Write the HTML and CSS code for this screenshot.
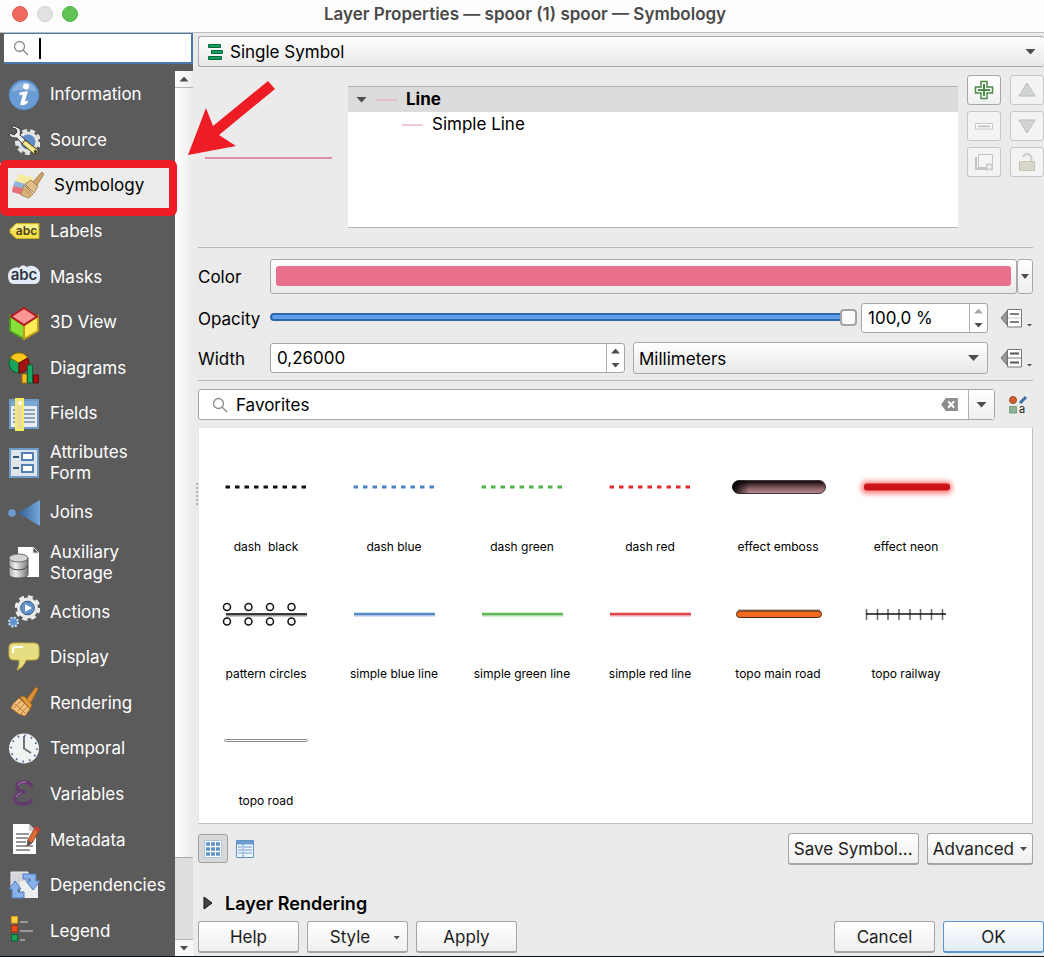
FILE: index.html
```html
<!DOCTYPE html>
<html lang="en">
<head>
<meta charset="utf-8">
<meta name="viewport" content="width=device-width, initial-scale=1">
<title>Layer Properties — spoor (1) spoor — Symbology</title>
<link rel="stylesheet" href="styles.css">
</head>
<body>
<div class="window">
  <header class="titlebar">
    <div class="lights">
      <button class="light light-close" aria-label="Close"></button>
      <button class="light light-min" aria-label="Minimize"></button>
      <button class="light light-max" aria-label="Zoom"></button>
    </div>
    <h1 class="title">Layer Properties — spoor (1) spoor — Symbology</h1>
  </header>

  <div class="body">
    <aside class="sidebar">
      <label class="side-search">
        <svg class="glass" viewBox="0 0 16 16" aria-hidden="true"><circle cx="6.5" cy="6.5" r="5"/><path d="M10.2 10.2L15 15"/></svg>
        <span class="caret"></span>
        <input type="text" aria-label="Search options">
      </label>
      <div class="side-main">
        <nav class="nav">
          <a class="nav-item" href="#information">
            <svg class="nav-icon" viewBox="0 0 32 32"><circle cx="16" cy="16" r="15" fill="#6a9bd2" stroke="#5583ba"/><path d="M4 13Q7 3 17 3Q26 4 28 13Q16 8 4 13Z" fill="#8db4e0"/><circle cx="18" cy="7.500" r="3" fill="#fff"/><path d="M11.500 13.500L20 12L16.800 22.500L20 21.500L19.500 24Q15 27.500 12 25.500L14.800 15.800L11.500 16.200Z" fill="#fff"/></svg>
            <span>Information</span></a>
          <a class="nav-item" href="#source">
            <svg class="nav-icon" viewBox="0 0 32 32"><circle cx="20" cy="18" r="11.500" fill="none" stroke="#e4e4e4" stroke-width="3" stroke-dasharray="5 3"/><circle cx="20" cy="18" r="9" fill="#5f8fc7" stroke="#e4e4e4" stroke-width="3"/><path d="M5 1.500L11 4Q14 7 12 11L22 20L18 24L9 14Q4 15 1 11L2 9L6 11L9 8L8 5L4 4Z" fill="#eee" stroke="#333"/><path d="M17 16L30 26L30 29L26 30L14 20Z" fill="#ecd873" stroke="#4b4325"/><path d="M17 19L26 27" stroke="#fff3ab" stroke-width="2"/><circle cx="27.500" cy="27.500" r="1.500" fill="#333"/></svg>
            <span>Source</span></a>
          <a class="nav-item nav-item-current" href="#symbology" aria-current="page">
            <svg class="nav-icon" viewBox="0 0 32 32"><path d="M8 4L22 8L17 15L3 11Z" fill="#f4eb9c"/><path d="M3 11L17 15L13 20L1 16Z" fill="#8fb6da"/><path d="M1 16L14 19L17 27L0 22Z" fill="#e86f78"/><path d="M12 15L21 24L17 28L9 25Q11 19 12 15Z" fill="#d8b47f" stroke="#b08a56"/><path d="M13 14L19 10L26 16L22 23Z" fill="#e0bf8d" stroke="#b08a56"/><path d="M21 12L30 2L32 4L25 15Z" fill="#d1a56a" stroke="#ab8350"/><path d="M13 19L18 25M15 17L20 23" stroke="#b88f58"/></svg>
            <span>Symbology</span></a>
          <a class="nav-item" href="#labels">
            <svg class="nav-icon" viewBox="0 0 32 32"><path d="M8 7.500H31V22.500H8L2 16.500V13.500Z" fill="#f5e04c" stroke="#c9ad22"/><path d="M8 8.500H30V14H3Z" fill="#fbf08e"/><text x="18.500" y="19" class="abc-small">abc</text></svg>
            <span>Labels</span></a>
          <a class="nav-item" href="#masks">
            <svg class="nav-icon" viewBox="0 0 32 32"><path d="M3.500 8Q8 5 11 7Q14 2 19 6Q24 3 29 7Q33 10 32 16Q32 23 27 23H5Q0 22 0 15Q0 10 3.500 8Z" fill="#e3ebf8"/><text x="16" y="19" class="abc-large">abc</text></svg>
            <span>Masks</span></a>
          <a class="nav-item" href="#view3d">
            <svg class="nav-icon" viewBox="0 0 32 32"><path d="M2 9L16 18V32L2 24Z" fill="#8ade3a" stroke="#4f9a1c" stroke-width="2"/><path d="M30 9L16 18V32L30 24Z" fill="#fcec55" stroke="#bd9a18" stroke-width="2"/><path d="M16 1L29 9.500L16 18L3 9.500Z" fill="#f99595" stroke="#b31d22" stroke-width="2"/></svg>
            <span>3D View</span></a>
          <a class="nav-item" href="#diagrams">
            <svg class="nav-icon" viewBox="0 0 32 32"><path d="M11 11L2.300 6A10 10 0 0 0 11 21Z" fill="#16a35a" stroke="#075c2c"/><path d="M11 11L2.300 6A10 10 0 0 1 19.700 6Z" fill="#fbc81b" stroke="#9d7500"/><path d="M11 11L19.700 6A10 10 0 0 1 11 21Z" fill="#a51214" stroke="#60090b"/><path d="M14 22H19V31H14Z" fill="#f9bb24" stroke="#a37308"/><path d="M19.500 13H24.500V31H19.500Z" fill="#16a765" stroke="#07622c"/><path d="M25.500 23H30.500V31H25.500Z" fill="#a61214" stroke="#650b0c"/></svg>
            <span>Diagrams</span></a>
          <a class="nav-item" href="#fields">
            <svg class="nav-icon" viewBox="0 0 32 32"><path d="M2 2H30V30H2Z" fill="#e9edf2" stroke="#6d9ac6" stroke-width="2"/><path d="M3 3H29V8H3Z" fill="#7ba7d2"/><path d="M5 12H27M5 16H27M5 20H27M5 24H27" stroke="#6f8ba8" stroke-width="1.500"/><path d="M8 1H15V32H8Z" fill="#e9dda4" stroke="#f6ef5c" stroke-width="2"/><circle cx="12" cy="5" r="2" fill="#fff"/></svg>
            <span>Fields</span></a>
          <a class="nav-item" href="#form">
            <svg class="nav-icon" viewBox="0 0 32 32"><path d="M2 2H30V30H2Z" fill="#dfe5ec" stroke="#6d9ac6" stroke-width="2"/><path d="M5 10H11M5 21H11" stroke="#39536e" stroke-width="2"/><path d="M14 6H25V13H14ZM14 18H25V25H14Z" fill="#fff" stroke="#5180b2" stroke-width="2"/></svg>
            <span>Attributes Form</span></a>
          <a class="nav-item" href="#joins">
            <svg class="nav-icon" viewBox="0 0 32 32"><defs><linearGradient id="joinFill"><stop stop-color="#335f92"/><stop offset="1" stop-color="#75a7dc"/></linearGradient></defs><circle cx="4" cy="16" r="3.800" fill="#6c9dce"/><path d="M10 16L32 3V29Z" fill="url(#joinFill)"/></svg>
            <span>Joins</span></a>
          <a class="nav-item" href="#storage">
            <svg class="nav-icon" viewBox="0 0 32 32"><defs><linearGradient id="drumFill"><stop stop-color="#a7a7a7"/><stop offset=".35" stop-color="#eee"/><stop offset="1" stop-color="#777"/></linearGradient></defs><path d="M10 0H25L31 6V30H10Z" fill="#fff"/><path d="M25 0L31 6H25Z" fill="#555" stroke="#ddd"/><path d="M1 11V27Q1 31 10.500 31Q20 31 20 27V11Z" fill="url(#drumFill)" stroke="#555"/><ellipse cx="10.500" cy="11" rx="9.500" ry="4" fill="#d6d6d6" stroke="#666"/><path d="M1 19Q4 23 10.500 23Q17 23 20 19" fill="none" stroke="#444"/></svg>
            <span>Auxiliary Storage</span></a>
          <a class="nav-item" href="#actions">
            <svg class="nav-icon" viewBox="0 0 32 32"><circle cx="19.500" cy="12" r="11.300" fill="none" stroke="#ececec" stroke-width="3" stroke-dasharray="5 3.875"/><circle cx="19.500" cy="12" r="8.500" fill="#5f93cf" stroke="#e9e9e9" stroke-width="4"/><circle cx="19.500" cy="12" r="6.800" fill="none" stroke="#2d4d73"/><path d="M17 8L24 12L17 16Z" fill="#fff"/><circle cx="5.500" cy="26" r="4.500" fill="#5f93cf" stroke="#cfe0f3" stroke-width="2" stroke-dasharray="2 1.500"/></svg>
            <span>Actions</span></a>
          <a class="nav-item" href="#display">
            <svg class="nav-icon" viewBox="0 0 32 32"><path d="M6 1H26Q31 1 31 6V13Q31 18 26 18H18Q16 25 9 28Q12 23 11 18H6Q1 18 1 13V6Q1 1 6 1Z" fill="#e6dc80" stroke="#c4b03e"/><path d="M5 11V7Q5 5 8 5H15" fill="none" stroke="#fff" stroke-width="2"/></svg>
            <span>Display</span></a>
          <a class="nav-item" href="#rendering">
            <svg class="nav-icon" viewBox="0 0 32 32"><path d="M18 13L28 0L30 2L22 17Z" fill="#dd8f35" stroke="#a8661c"/><path d="M12 10L16 9L24 18L22 22Z" fill="#e59b3e" stroke="#a96a1f"/><path d="M11 11L22 22L17 29L11 27L3 21L5 17Z" fill="#edc17b" stroke="#b5762b"/><path d="M6 21L13 14M10 24L16 17M13 27L19 20M7 17L17 26" stroke="#b9792f"/></svg>
            <span>Rendering</span></a>
          <a class="nav-item" href="#temporal">
            <svg class="nav-icon" viewBox="0 0 32 32"><circle cx="16" cy="15.500" r="15" fill="#f1f2f2"/><circle cx="16" cy="15.500" r="13" fill="none" stroke="#476b99" stroke-width="2" stroke-dasharray="1.500 5.306"/><path d="M16 3V15.500L23 20" fill="none" stroke="#6e7478" stroke-width="2"/></svg>
            <span>Temporal</span></a>
          <a class="nav-item" href="#variables">
            <svg class="nav-icon" viewBox="0 0 32 32"><path d="M23 8Q22 4 16 4Q9 4 9 9Q9 13 17 14Q7 15 7 21Q7 26 15 26Q22 26 24 21" fill="none" stroke="#653a6e" stroke-width="3.500"/><circle cx="23" cy="8" r="2" fill="#653a6e"/><path d="M10 7Q13 3 18 4M8 19Q9 16 13 15" fill="none" stroke="#a989ae"/></svg>
            <span>Variables</span></a>
          <a class="nav-item" href="#metadata">
            <svg class="nav-icon" viewBox="0 0 32 32"><path d="M5 0H21L28 7V30H5Z" fill="#fff"/><path d="M21 0L28 7H21Z" fill="#ccc"/><path d="M8 10H21M8 14H20M8 18H18M8 22H25M8 26H22" stroke="#777" stroke-width="1.500"/><path d="M28 2L32 5L24 19L19 22L20 16Z" fill="#db6d35" stroke="#934522"/><path d="M28 2L32 5L30 8L26 5Z" fill="#cf3f3f"/><path d="M20 16L24 19L19 22Z" fill="#555"/></svg>
            <span>Metadata</span></a>
          <a class="nav-item" href="#dependencies">
            <svg class="nav-icon" viewBox="0 0 32 32"><path d="M3 2H20V19H3Z" fill="#d3d7db" stroke="#eee"/><path d="M12 11H30V28H12Z" fill="#eceeef"/><path d="M15 4H28V11H32L25 20L18 11H22V9H15Z" fill="#8ab2ea" stroke="#4f7dbd"/><path d="M1 19L7 11L13 19H10V22H16V28H4V19Z" fill="#8ab2ea" stroke="#4f7dbd"/></svg>
            <span>Dependencies</span></a>
          <a class="nav-item" href="#legend">
            <svg class="nav-icon" viewBox="0 0 32 32"><path d="M3.500 1.500H9.500V8H3.500Z" fill="#fdd23d" stroke="#e79a12"/><path d="M3.500 10.500H9.500V17H3.500Z" fill="#e94b1f" stroke="#a72d0b"/><path d="M3.500 19.500H9.500V26H3.500Z" fill="#18a157" stroke="#06622d"/><path d="M12 7H20M12 16H25M12 25H17" stroke="#999" stroke-width="2"/></svg>
            <span>Legend</span></a>
        </nav>
        <div class="scrollbar" aria-hidden="true">
          <span class="scroll-end"><i class="tri tri-up"></i></span>
          <span class="scroll-thumb"></span>
          <span class="scroll-rest"></span>
          <span class="scroll-end scroll-end-low"><i class="tri tri-down"></i></span>
        </div>
      </div>
    </aside>
    <div class="splitter" aria-hidden="true"></div>

    <main class="content">
      <div class="select-box renderer">
        <svg class="select-icon" viewBox="0 0 17 18"><path d="M1.500 1.500H13.500V4.500H1.500ZM4.500 7.500H15.500V10.500H4.500ZM1.500 13.500H14.500V16.500H1.500Z" fill="#10a060" stroke="#08683a"/></svg>
        <select aria-label="Renderer"><option>Single Symbol</option></select>
        <i class="tri tri-down"></i>
      </div>

      <section class="symbol">
        <div class="preview"><span class="preview-line"></span></div>
        <ul class="tree">
          <li class="tree-row tree-row-root"><i class="tri tri-down"></i><span class="swatch"></span>Line</li>
          <li class="tree-row tree-row-child"><span class="swatch"></span>Simple Line</li>
        </ul>
        <div class="layer-tools">
          <button class="tool" aria-label="Add symbol layer"><svg viewBox="0 0 20 20"><path d="M7 1.500H13V7H18.500V13H13V18.500H7V13H1.500V7H7Z" fill="#fff" stroke="#4b8b46" stroke-width="1.500"/><path d="M10 4V16M4 10H16" stroke="#4b8b46" stroke-width="2"/></svg></button>
          <button class="tool" disabled aria-label="Move up"><svg viewBox="0 0 20 20"><path d="M10 3L18 16H2Z" fill="#d3d5d5" stroke="#b7baba"/></svg></button>
          <button class="tool" disabled aria-label="Remove symbol layer"><svg viewBox="0 0 20 20"><path d="M1.500 7.500H18.500V13H1.500Z" fill="#fff" stroke="#c6c6c6"/><path d="M4 10.300H16" stroke="#c6c6c6" stroke-width="2"/></svg></button>
          <button class="tool" disabled aria-label="Move down"><svg viewBox="0 0 20 20"><path d="M10 17L18 4H2Z" fill="#d3d5d5" stroke="#b7baba"/></svg></button>
          <button class="tool" disabled aria-label="Duplicate"><svg viewBox="0 0 20 20"><path d="M1 5H3V16H14V18H1Z" fill="#c4c4c4"/><path d="M4.500 2.500H18.500V15.500H4.500Z" fill="#f5f5f5" stroke="#c2c2c2"/><path d="M12 11.500H19V18.500H12Z" fill="#ccc"/><path d="M13 15H18M15.500 12.500V17.500" stroke="#fff"/></svg></button>
          <button class="tool" disabled aria-label="Lock colour"><svg viewBox="0 0 20 20"><path d="M6 5Q9 0 13 3Q15 5 14.500 10" fill="none" stroke="#ccc" stroke-width="2"/><path d="M2.500 9.500H17.500V18.500H2.500Z" fill="#d9d7ca" stroke="#c9c6b6"/></svg></button>
        </div>
      </section>

      <section class="form">
        <div class="row">
          <label class="row-label" for="color">Color</label>
          <button class="color" id="color"><span class="color-fill"></span></button>
          <button class="color-menu" aria-label="Color menu"><i class="tri tri-down"></i></button>
        </div>
        <div class="row">
          <label class="row-label" for="opacity">Opacity</label>
          <input class="slider" id="opacity" type="range" min="0" max="100" value="100">
          <div class="spin spin-opacity">
            <input type="text" value="100,0 %" aria-label="Opacity value">
            <div class="spin-buttons"><button disabled aria-label="Increase"><i class="tri tri-up"></i></button><button aria-label="Decrease"><i class="tri tri-down"></i></button></div>
          </div>
          <button class="override" aria-label="Data defined opacity"><svg viewBox="0 0 32 20"><path d="M7 3L1 10L7 17Z" fill="#999" stroke="#777"/><path d="M7.500 1.500H21.500V19H7.500Z" fill="#fff" stroke="#777"/><path d="M10 6H19M10 14H19" stroke="#555" stroke-width="1.500"/><path d="M8 10H21" stroke="#ccc"/><path d="M27 16H32L29.500 18.500Z" fill="#555"/></svg></button>
        </div>
        <div class="row">
          <label class="row-label" for="width">Width</label>
          <div class="spin spin-width">
            <input id="width" type="text" value="0,26000">
            <div class="spin-buttons"><button aria-label="Increase"><i class="tri tri-up"></i></button><button aria-label="Decrease"><i class="tri tri-down"></i></button></div>
          </div>
          <div class="select-box unit">
            <select aria-label="Unit"><option>Millimeters</option></select>
            <i class="tri tri-down"></i>
          </div>
          <button class="override" aria-label="Data defined width"><svg viewBox="0 0 32 20"><path d="M7 3L1 10L7 17Z" fill="#999" stroke="#777"/><path d="M7.500 1.500H21.500V19H7.500Z" fill="#fff" stroke="#777"/><path d="M10 5.500H19M10 14.500H19" stroke="#555" stroke-width="2"/><path d="M8 10H21" stroke="#777"/><path d="M27 16H32L29.500 18.500Z" fill="#555"/></svg></button>
        </div>
      </section>

      <section class="library">
        <div class="find">
          <div class="find-box">
            <svg class="glass" viewBox="0 0 16 16" aria-hidden="true"><circle cx="6.500" cy="6.500" r="5"/><path d="M10.200 10.200L15 15"/></svg>
            <input type="text" value="Favorites" aria-label="Symbol filter">
            <button class="clear" aria-label="Clear"><svg viewBox="0 0 18 14"><path d="M5 0H18V14H5L0 7Z" fill="#8e8e8e"/><path d="M7.500 3.500L14 10.500M14 3.500L7.500 10.500" stroke="#fff" stroke-width="2"/></svg></button>
            <button class="find-menu" aria-label="Symbol groups"><i class="tri tri-down"></i></button>
          </div>
          <button class="manager" aria-label="Style manager"><svg viewBox="0 0 20 20"><circle cx="5" cy="5" r="3.500" fill="#cf6032" stroke="#a04420"/><path d="M12 8L18 2" stroke="#3f6ea3" stroke-width="3"/><path d="M1.500 11.500H8.500V18H1.500Z" fill="#8cb394" stroke="#78a081"/><text x="14" y="18" class="tiny-a">a</text></svg></button>
        </div>
        <ul class="symbols">
          <li class="cell"><svg viewBox="0 0 100 100"><path d="M9.500 50H92" class="dash" stroke="#111"/></svg><span>dash&nbsp; black</span></li>
          <li class="cell"><svg viewBox="0 0 100 100"><path d="M9.500 50H92" class="dash" stroke="#4a80c4"/></svg><span>dash blue</span></li>
          <li class="cell"><svg viewBox="0 0 100 100"><path d="M9.500 50H92" class="dash" stroke="#4fb548"/></svg><span>dash green</span></li>
          <li class="cell"><svg viewBox="0 0 100 100"><path d="M9.500 50H92" class="dash" stroke="#e3282c"/></svg><span>dash red</span></li>
          <li class="cell"><svg viewBox="0 0 100 100"><defs><linearGradient id="emboss" x2="0" y2="1"><stop offset=".1" stop-color="#1a1012"/><stop offset=".6" stop-color="#8a5f65"/><stop offset="1" stop-color="#b98e93"/></linearGradient><linearGradient id="embossEnd"><stop stop-color="#000"/><stop offset=".18" stop-color="#000" stop-opacity="0"/></linearGradient></defs><rect x="4.500" y="43.500" width="93" height="13" rx="6.500" fill="url(#emboss)" stroke="#43343a"/><rect x="4.500" y="43.500" width="93" height="13" rx="6.500" fill="url(#embossEnd)"/></svg><span>effect emboss</span></li>
          <li class="cell"><svg viewBox="0 0 100 100"><defs><filter id="glow" x="-.2" y="-2" width="1.400" height="5"><feGaussianBlur stdDeviation="2.500"/></filter></defs><rect x="5" y="44" width="91" height="13" rx="5" fill="#f88" filter="url(#glow)"/><rect x="8" y="46.500" width="86" height="7" rx="3" fill="#cc1418"/></svg><span>effect neon</span></li>
          <li class="cell"><svg viewBox="0 0 100 100"><path d="M10 51H91" stroke="#9a9d98" stroke-width="3"/><path d="M10 50H91" stroke="#111" stroke-width="1.500"/><g fill="#fff" stroke="#111" stroke-width="1.500"><circle cx="11" cy="43" r="3.500"/><circle cx="32.500" cy="43" r="3.500"/><circle cx="54" cy="43" r="3.500"/><circle cx="75.500" cy="43" r="3.500"/><circle cx="11" cy="57.500" r="3.500"/><circle cx="32.500" cy="57.500" r="3.500"/><circle cx="54" cy="57.500" r="3.500"/><circle cx="75.500" cy="57.500" r="3.500"/></g></svg><span>pattern circles</span></li>
          <li class="cell"><svg viewBox="0 0 100 100"><path d="M10 50.500H91" stroke="#a9c6e6" stroke-width="4"/><path d="M10 50H91" stroke="#3d75bd" stroke-width="1.500"/></svg><span>simple blue line</span></li>
          <li class="cell"><svg viewBox="0 0 100 100"><path d="M10 50.500H91" stroke="#addca9" stroke-width="4"/><path d="M10 50H91" stroke="#45ac3e" stroke-width="1.500"/></svg><span>simple green line</span></li>
          <li class="cell"><svg viewBox="0 0 100 100"><path d="M10 50.500H91" stroke="#f2a2a6" stroke-width="4"/><path d="M10 50H91" stroke="#dc2329" stroke-width="1.500"/></svg><span>simple red line</span></li>
          <li class="cell"><svg viewBox="0 0 100 100"><path d="M10 46.500H92" stroke="#9b8377" stroke-width="2"/><rect x="8.500" y="47" width="85" height="6.500" rx="3.200" fill="#f26a1d" stroke="#4b2a16"/></svg><span>topo main road</span></li>
          <li class="cell"><svg viewBox="0 0 100 100"><path d="M10.500 45V56M21.500 45V56M32 45V56M43 45V56M54 45V56M64.500 45V56M75.500 45V56M86.500 45V56" stroke="#666" stroke-width="1.500"/><path d="M10 50H90" stroke="#111" stroke-width="1.500"/></svg><span>topo railway</span></li>
          <li class="cell"><svg viewBox="0 0 100 100"><rect x="8.500" y="48.500" width="83" height="2" rx="1" fill="#fff" stroke="#8b8b8b"/></svg><span>topo road</span></li>
        </ul>
        <div class="library-bar">
          <button class="view view-on" aria-label="Icon view" aria-pressed="true"><svg viewBox="0 0 18 18"><path d="M.5.500H17.500V17.500H.5Z" fill="#fff" stroke="#a9c6e2"/><path d="M2 4H16M2 9H16M2 14H16" stroke="#5f94ca" stroke-width="3.500" stroke-dasharray="4 1"/></svg></button>
          <button class="view" aria-label="List view"><svg viewBox="0 0 18 18"><path d="M.5.500H17.500V17.500H.5Z" fill="#eef5fb" stroke="#5f94ca"/><path d="M1 1H17V4.500H1Z" fill="#6c9dd0"/><path d="M2 7H6M8 7H16M2 10H6M8 10H16M2 13H6M8 13H16M7 4V17" stroke="#6c9dd0"/></svg></button>
          <button class="btn btn-tight push">Save Symbol...</button>
          <button class="btn btn-tight">Advanced<i class="tri tri-down tri-small"></i></button>
        </div>
      </section>

      <button class="disclosure" aria-expanded="false"><svg viewBox="0 0 10 14"><path d="M1 1L9 7L1 13Z" fill="#444" stroke="#111"/></svg>Layer Rendering</button>

      <footer class="footer">
        <button class="btn">Help</button>
        <button class="btn btn-style">Style<i class="tri tri-down tri-small"></i></button>
        <button class="btn">Apply</button>
        <button class="btn push">Cancel</button>
        <button class="btn btn-default">OK</button>
      </footer>
    </main>
  </div>
  <svg class="pointer" viewBox="0 0 88 76" aria-hidden="true"><path d="M0 75L18 28L25 46L80 1L87 9L31 55L48 66Z" fill="#ee1c25"/></svg>
</div>
</body>
</html>
```
FILE: styles.css
```css
* { box-sizing: border-box; }

body {
  margin: 0;
  background: #ebebeb;
  color: #000;
  font: 17px/21px Inter, "Liberation Sans", sans-serif;
}

button, input, select { font: inherit; color: inherit; margin: 0; }
button { padding: 0; border: 0; background: none; }
input { min-width: 0; border: 0; background: none; outline: 0; padding: 0; }
ul { list-style: none; margin: 0; padding: 0; }
svg { display: block; flex: none; }

.window {
  position: relative;
  display: flex;
  flex-direction: column;
  min-height: 100vh;
  overflow: hidden;
  border-bottom: 1px solid #0b1218;
}

/* Title bar */
.titlebar {
  display: grid;
  grid-template-columns: 1fr auto 1fr;
  align-items: center;
  height: 33px;
  padding: 0 6px 4px 12px;
  background: #fdfdfd;
  border-bottom: 1px solid #bdbdbd;
}
.lights { display: flex; gap: 9px; }
.light { width: 16px; height: 16px; border-radius: 50%; border: 1px solid #d2d2d2; background: #e2e2e2; }
.light-close { background: #ee6a5f; border-color: #df5f55; }
.light-max { background: #5fc454; border-color: #51b446; }
.title { margin: 0; color: #4a4a4a; font-size: 17px; font-weight: 600; line-height: 20px; }

.body { display: flex; flex: 1; }

/* Sidebar */
.sidebar { display: flex; flex-direction: column; width: 193px; background: #5b5b5b; }
.side-search {
  position: relative;
  display: flex;
  align-items: center;
  gap: 10px;
  height: 31px;
  margin-left: 4px;
  padding-left: 9px;
  background: #fff;
  border: 1px solid #4b78ad;
  border-width: 1px 2px 2px 0;
}
.side-search input { flex: 1; }
.caret { width: 2px; height: 21px; background: #000; }
.glass { width: 16px; height: 16px; fill: none; stroke: #8c8c8c; stroke-width: 1.3; }
.side-main { display: flex; flex: 1; }
.nav { display: flex; flex-direction: column; flex: 1; padding: 8px 0 2px; }
.nav-item {
  position: relative;
  display: flex;
  align-items: center;
  gap: 10px;
  flex: 1 1 auto;
  padding: 0 8px;
  color: #fff;
  text-decoration: none;
}
.nav-icon { width: 32px; height: 34px; }
.nav-item-current { padding-left: 12px; background: #ececec; color: #000; }
.nav-item-current::after {
  content: "";
  position: absolute;
  inset: -3px -2px -7px 0;
  border: 8px solid #ee1c25;
  border-radius: 6px;
}
.abc-small { font: 600 12px Inter, sans-serif; text-anchor: middle; fill: #4a4216; }
.abc-large { font: 600 15px Inter, sans-serif; text-anchor: middle; fill: #2e3440; }

.scrollbar { display: flex; flex-direction: column; width: 18px; margin-top: 7px; background: linear-gradient(90deg, #fff, #ececec); }
.scroll-end { display: grid; place-items: center; height: 17px; border-bottom: 1px solid #b5b5b5; }
.scroll-end .tri { width: 9px; height: 5px; }
.scroll-end-low { border-top: 1px solid #b5b5b5; border-bottom: 0; background: #f8f8f8; }
.scroll-thumb { flex: 770; border-bottom: 1px solid #aaa; }
.scroll-rest { flex: 81; background: #dedede; }

.splitter { display: grid; place-items: center end; width: 5px; padding-bottom: 2px; }
.splitter::after { content: ""; width: 2px; height: 22px; background: repeating-linear-gradient(#b0b0b0 0 2px, transparent 2px 4px); }

.tri { display: block; width: 11px; height: 6px; background: #4e4e4e; clip-path: polygon(0 0, 100% 0, 50% 100%); }
.tri-up { clip-path: polygon(50% 0, 100% 100%, 0 100%); }
.tri-small { width: 7px; height: 4px; }

/* Main column */
.content { display: flex; flex-direction: column; flex: 1; min-width: 0; padding: 3px 0 3px; }

.select-box {
  position: relative;
  display: flex;
  align-items: center;
  border: 1px solid #a9a9a9;
  border-radius: 3px;
  background: linear-gradient(#fefefe, #e9e9e9);
}
.select-box select { flex: 1; height: 100%; padding-top: 2px; border: 0; background: none; appearance: none; outline: 0; }
.select-box .tri { position: absolute; right: 8px; pointer-events: none; }
.renderer { height: 31px; border-right: 0; }
.renderer select { padding-left: 31px; }
.select-icon { position: absolute; left: 8px; width: 17px; height: 18px; pointer-events: none; }

.symbol { display: flex; gap: 9px; height: 153px; margin-top: 8px; }
.preview { display: flex; align-items: center; width: 141px; padding: 0 7px; }
.preview-line { flex: 1; height: 2px; margin-bottom: -12px; background: #de8fa6; }
.tree { flex: 1; margin-top: 11px; background: #fff; border: 1px solid #b4b4b4; border-width: 1px 0; }
.tree-row { display: flex; align-items: center; gap: 9px; height: 25px; }
.tree-row-root { padding-left: 8px; background: #dcdcdc; font-weight: 700; }
.tree-row-root .swatch { background: #dfbfca; }
.tree-row-child { padding-left: 54px; }
.swatch { width: 21px; height: 2px; background: #f2c8d4; }
.layer-tools { display: grid; grid-template-columns: 34px 34px; grid-auto-rows: 30px; gap: 6px 9px; }
.tool { display: grid; place-items: center; border: 1px solid #a5a5a5; border-radius: 3px; background: linear-gradient(#fff, #f0f0f0); }
.tool:disabled { border-color: #c6c6c6; background: #f3f3f3; }
.tool svg { width: 20px; height: 20px; }

/* Form rows */
.form {
  display: flex;
  flex-direction: column;
  gap: 9px;
  margin: 19px 11px 0 0;
  padding: 11px 0 6px;
  border-top: 1px solid #b9b9b9;
  border-bottom: 1px solid #b9b9b9;
}
.row { display: flex; align-items: center; }
.row-label { width: 72px; padding-top: 2px; }
.color { flex: 1; height: 35px; padding: 5px; border: 1px solid #a9a9a9; border-radius: 3px; background: linear-gradient(#fff, #eaeaea); }
.color-fill { display: block; height: 20px; margin-bottom: 2px; border-radius: 3px; background: #e8708c; }
.color-menu { display: grid; place-items: center; width: 16px; height: 35px; border: 1px solid #a9a9a9; border-radius: 3px; background: linear-gradient(#fff, #eee); }
.color-menu .tri { width: 8px; height: 5px; }

.slider { flex: 1; height: 18px; margin: 0 4px 2px 0; appearance: none; background: none; }
.slider::-webkit-slider-runnable-track { height: 8px; border: 2px solid #2f66aa; border-right: 0; border-radius: 4px; background: #5e9fed; }
.slider::-webkit-slider-thumb { appearance: none; width: 17px; height: 17px; margin-top: -6px; border: 2px solid #a3a3a3; border-radius: 4px; background: #fafafa; }

.spin { display: flex; height: 30px; border: 1px solid #a5a5a5; border-radius: 3px; background: #fff; }
.spin input { flex: 1; padding-left: 6px; }
.spin-opacity { width: 127px; }
.spin-width { flex: 1; }
.spin-buttons { display: grid; width: 18px; border-left: 1px solid #b0b0b0; }
.spin-buttons button { display: grid; place-items: center; }
.spin-buttons button:disabled .tri { background: #aaa; }
.spin-buttons .tri { width: 9px; height: 5px; }
.unit { flex: 1; height: 32px; margin-left: 8px; }
.unit select { padding-left: 5px; }
.override { width: 33px; margin-left: 12px; }
.override svg { width: 32px; height: 20px; }

/* Symbol library */
.library { display: flex; flex-direction: column; flex: 1; margin-right: 11px; }
.find { display: flex; align-items: center; gap: 13px; margin: 8px 0 7px; }
.find-box { display: flex; align-items: center; flex: 1; height: 31px; padding-left: 13px; border: 1px solid #a5a5a5; border-radius: 3px; background: #fff; }
.find-box input { flex: 1; padding: 2px 0 0 8px; }
.clear svg { width: 17px; height: 13px; margin-right: 10px; }
.find-menu { display: grid; place-items: center; width: 26px; height: 100%; border-left: 1px solid #b0b0b0; background: linear-gradient(#fff, #eee); }
.manager { width: 25px; }
.manager svg { width: 20px; height: 20px; }
.tiny-a { font: 11px Inter, sans-serif; text-anchor: middle; fill: #222; }

.symbols {
  flex: 1;
  display: grid;
  grid-template-columns: repeat(auto-fill, 128px);
  grid-auto-rows: 127px;
  padding-left: 3px;
  background: #fff;
  border: 1px solid #c0c0c0;
  border-top-color: #e5e5e5;
  border-left-color: #e5e5e5;
}
.cell { display: flex; flex-direction: column; align-items: center; gap: 1px; padding-top: 9px; font-size: 12px; line-height: 17px; }
.cell svg { width: 100px; height: 100px; }
.dash { stroke-width: 3; stroke-dasharray: 4.5 5; }

.library-bar { display: flex; align-items: center; height: 31px; margin-top: 9px; gap: 8px; }
.view { display: grid; place-items: center; width: 18px; height: 29px; }
.view-on { width: 30px; border: 1px solid #a0a0a0; border-radius: 3px; background: #d8d8d8; }
.view svg { width: 18px; height: 18px; }

.btn {
  display: flex;
  align-items: center;
  justify-content: center;
  min-width: 101px;
  height: 32px;
  padding-top: 2px;
  border: 1px solid #a5a5a5;
  border-bottom-width: 2px;
  border-radius: 3px;
  background: linear-gradient(#fff, #efefef);
  color: #1c1c1c;
}
.btn-tight { padding: 2px 5px 0; gap: 6px; }
.btn-style { padding-left: 15px; gap: 23px; }
.btn-default { border-color: #5b96d0; background: linear-gradient(#fff, #e2ebf5); }
.push { margin-left: auto; }

.disclosure { display: flex; align-items: center; gap: 12px; height: 24px; margin: 27px auto 6px 5px; font-size: 18px; font-weight: 600; }
.disclosure svg { width: 10px; height: 14px; }
.footer { display: flex; gap: 8px; }

/* Callout arrow drawn over the dialog */
.pointer { position: absolute; left: 188px; top: 80px; width: 88px; height: 76px; pointer-events: none; }
```
